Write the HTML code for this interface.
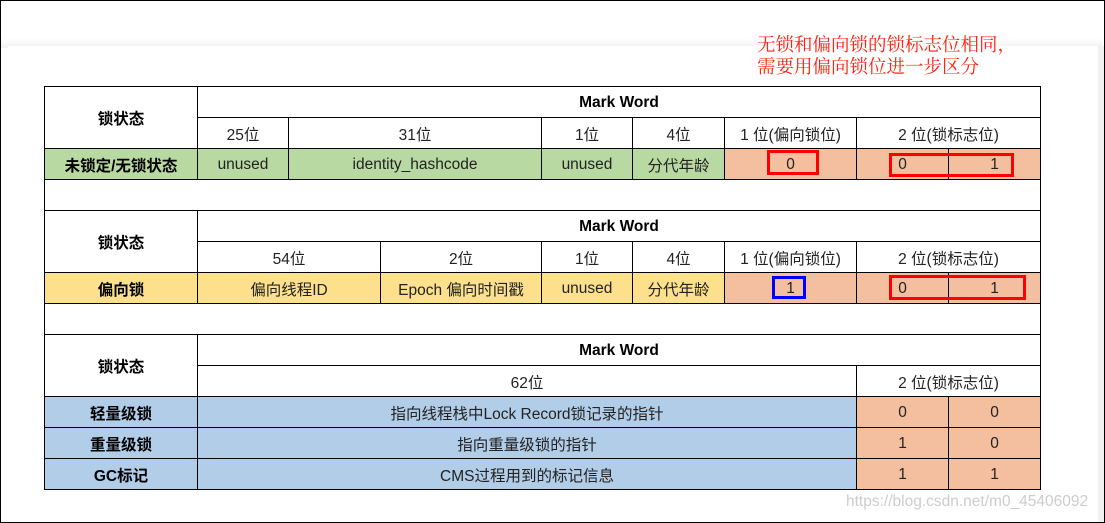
<!DOCTYPE html>
<html><head><meta charset="utf-8"><style>
*{margin:0;padding:0;box-sizing:border-box}
body{width:1105px;height:523px;overflow:hidden;background:#fff;position:relative;font-family:"Liberation Sans","Noto Sans CJK SC",sans-serif;}
.frame{position:absolute;left:0;top:0;width:1105px;height:523px;border:1px solid #000;}
.shade{position:absolute;left:1px;top:38px;width:1102px;height:10px;background:linear-gradient(#fff,#f2f2f2);}
.rs{position:absolute;left:1098px;top:46px;width:6px;height:476px;background:#f1f1f1;}
.card{position:absolute;left:8px;top:46px;width:1090px;height:476px;background:#fff;}
.c{position:absolute;border:1px solid #000;display:flex;align-items:center;justify-content:center;font-size:15.5px;color:#222;white-space:nowrap;padding-top:1px}
.b{font-weight:bold;color:#000}
.g{background:#b9d9a2}.o{background:#f4bf9e}.y{background:#fde08c}.bl{background:#b1cde8}
.box{position:absolute;border:3px solid #f00}
.note{position:absolute;left:757px;top:33px;color:#f21;font-family:"Noto Serif CJK SC",serif;font-size:18.5px;line-height:22px}
.wm{position:absolute;left:846px;top:493px;color:#ccc;font-size:15.5px}
</style></head><body>
<div class="frame"></div><div class="shade"></div><div class="rs"></div><div class="card"></div>
<div class="note">无锁和偏向锁的锁标志位相同，<br>需要用偏向锁位进一步区分</div>

<div class="c b" style="left:44px;top:86px;width:154px;height:63px">锁状态</div>
<div class="c b" style="left:197px;top:86px;width:844px;height:32px">Mark Word</div>
<div class="c" style="left:197px;top:117px;width:92px;height:32px">25位</div>
<div class="c" style="left:288px;top:117px;width:254px;height:32px">31位</div>
<div class="c" style="left:541px;top:117px;width:92px;height:32px">1位</div>
<div class="c" style="left:632px;top:117px;width:93px;height:32px">4位</div>
<div class="c" style="left:724px;top:117px;width:133px;height:32px">1 位(偏向锁位)</div>
<div class="c" style="left:856px;top:117px;width:185px;height:32px">2 位(锁标志位)</div>
<div class="c b g" style="left:44px;top:148px;width:154px;height:32px">未锁定/无锁状态</div>
<div class="c g" style="left:197px;top:148px;width:92px;height:32px">unused</div>
<div class="c g" style="left:288px;top:148px;width:254px;height:32px">identity_hashcode</div>
<div class="c g" style="left:541px;top:148px;width:92px;height:32px">unused</div>
<div class="c g" style="left:632px;top:148px;width:93px;height:32px">分代年龄</div>
<div class="c o" style="left:724px;top:148px;width:133px;height:32px">0</div>
<div class="c o" style="left:856px;top:148px;width:93px;height:32px">0</div>
<div class="c o" style="left:948px;top:148px;width:93px;height:32px">1</div>
<div class="c" style="left:44px;top:179px;width:997px;height:32px"></div>

<div class="c b" style="left:44px;top:210px;width:154px;height:63px">锁状态</div>
<div class="c b" style="left:197px;top:210px;width:844px;height:32px">Mark Word</div>
<div class="c" style="left:197px;top:241px;width:184px;height:32px">54位</div>
<div class="c" style="left:380px;top:241px;width:162px;height:32px">2位</div>
<div class="c" style="left:541px;top:241px;width:92px;height:32px">1位</div>
<div class="c" style="left:632px;top:241px;width:93px;height:32px">4位</div>
<div class="c" style="left:724px;top:241px;width:133px;height:32px">1 位(偏向锁位)</div>
<div class="c" style="left:856px;top:241px;width:185px;height:32px">2 位(锁标志位)</div>
<div class="c b y" style="left:44px;top:272px;width:154px;height:32px">偏向锁</div>
<div class="c y" style="left:197px;top:272px;width:184px;height:32px">偏向线程ID</div>
<div class="c y" style="left:380px;top:272px;width:162px;height:32px">Epoch 偏向时间戳</div>
<div class="c y" style="left:541px;top:272px;width:92px;height:32px">unused</div>
<div class="c y" style="left:632px;top:272px;width:93px;height:32px">分代年龄</div>
<div class="c o" style="left:724px;top:272px;width:133px;height:32px">1</div>
<div class="c o" style="left:856px;top:272px;width:93px;height:32px">0</div>
<div class="c o" style="left:948px;top:272px;width:93px;height:32px">1</div>
<div class="c" style="left:44px;top:303px;width:997px;height:32px"></div>

<div class="c b" style="left:44px;top:334px;width:154px;height:63px">锁状态</div>
<div class="c b" style="left:197px;top:334px;width:844px;height:32px">Mark Word</div>
<div class="c" style="left:197px;top:365px;width:660px;height:32px">62位</div>
<div class="c" style="left:856px;top:365px;width:185px;height:32px">2 位(锁标志位)</div>
<div class="c b bl" style="left:44px;top:396px;width:154px;height:32px">轻量级锁</div>
<div class="c bl" style="left:197px;top:396px;width:660px;height:32px">指向线程栈中Lock Record锁记录的指针</div>
<div class="c o" style="left:856px;top:396px;width:93px;height:32px">0</div>
<div class="c o" style="left:948px;top:396px;width:93px;height:32px">0</div>
<div class="c b bl" style="left:44px;top:427px;width:154px;height:32px">重量级锁</div>
<div class="c bl" style="left:197px;top:427px;width:660px;height:32px">指向重量级锁的指针</div>
<div class="c o" style="left:856px;top:427px;width:93px;height:32px">1</div>
<div class="c o" style="left:948px;top:427px;width:93px;height:32px">0</div>
<div class="c b bl" style="left:44px;top:458px;width:154px;height:32px">GC标记</div>
<div class="c bl" style="left:197px;top:458px;width:660px;height:32px">CMS过程用到的标记信息</div>
<div class="c o" style="left:856px;top:458px;width:93px;height:32px">1</div>
<div class="c o" style="left:948px;top:458px;width:93px;height:32px">1</div>

<div class="box" style="left:767px;top:150px;width:52px;height:25px"></div>
<div class="box" style="left:889px;top:153px;width:125px;height:24px"></div>
<div class="box" style="left:772px;top:276px;width:34px;height:23px;border-color:#00f"></div>
<div class="box" style="left:889px;top:275px;width:137px;height:25px"></div>
<div class="wm">https://blog.csdn.net/m0_45406092</div>
</body></html>
